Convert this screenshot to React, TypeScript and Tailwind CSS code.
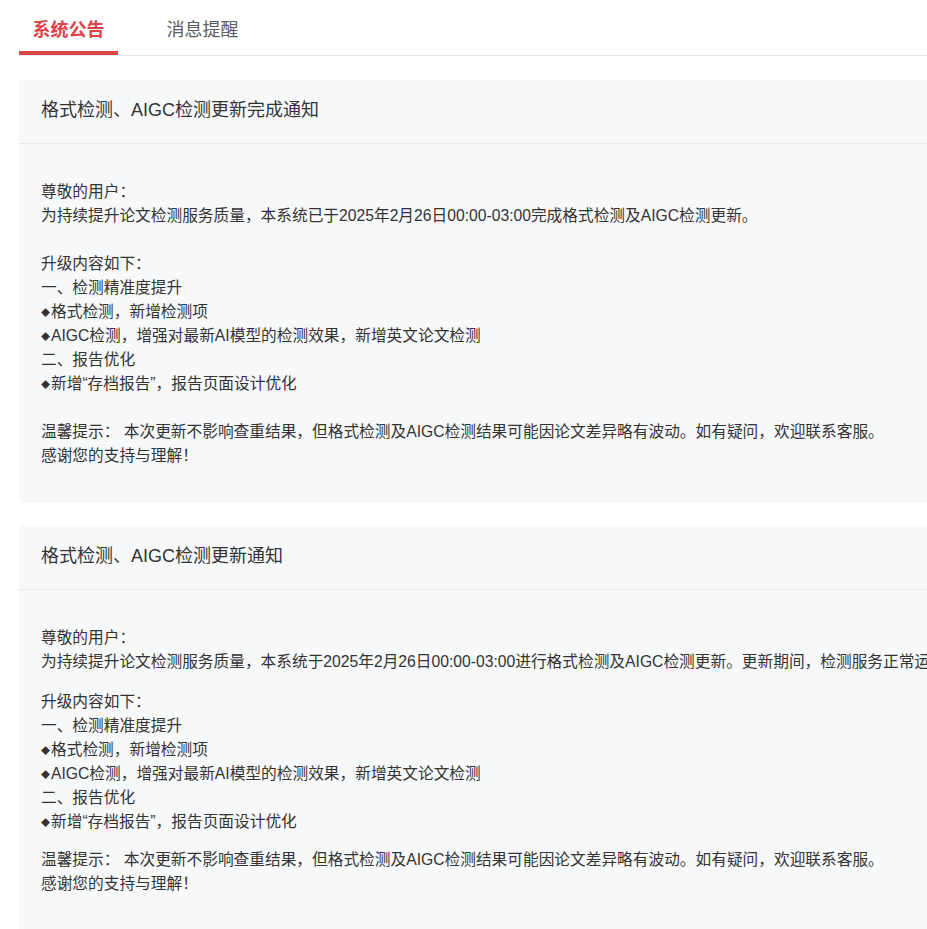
import { useState } from 'react'

// ============================================
// DATA
// ============================================

type Notice = {
  title: string
  greeting: string
  intro: string
  items: string[]
  tip: string
  thanks: string
  spacing: 'blank' | 'margin'
}

const upgradeItems = [
  '升级内容如下：',
  '一、检测精准度提升',
  '◆格式检测，新增检测项',
  '◆AIGC检测，增强对最新AI模型的检测效果，新增英文论文检测',
  '二、报告优化',
  '◆新增“存档报告”，报告页面设计优化',
]

const tipText = '温馨提示： 本次更新不影响查重结果，但格式检测及AIGC检测结果可能因论文差异略有波动。如有疑问，欢迎联系客服。'

const notices: Notice[] = [
  {
    title: '格式检测、AIGC检测更新完成通知',
    greeting: '尊敬的用户：',
    intro: '为持续提升论文检测服务质量，本系统已于2025年2月26日00:00-03:00完成格式检测及AIGC检测更新。',
    items: upgradeItems,
    tip: tipText,
    thanks: '感谢您的支持与理解！',
    spacing: 'blank',
  },
  {
    title: '格式检测、AIGC检测更新通知',
    greeting: '尊敬的用户：',
    intro: '为持续提升论文检测服务质量，本系统于2025年2月26日00:00-03:00进行格式检测及AIGC检测更新。更新期间，检测服务正常运行，不影响您的使用。',
    items: upgradeItems,
    tip: tipText,
    thanks: '感谢您的支持与理解！',
    spacing: 'margin',
  },
]

const tabs = ['系统公告', '消息提醒']

// ============================================
// COMPONENTS
// ============================================

function Line({ text }: { text: string }) {
  // small diamond bullet, like the original page renders it
  if (text.startsWith('◆')) {
    return (
      <p className="h-6">
        <span className="mr-[1px] align-[1px] text-[9px] leading-[0]">◆</span>
        {text.slice(1)}
      </p>
    )
  }
  return <p>{text}</p>
}

function NoticeCard({ notice }: { notice: Notice }) {
  const blank = notice.spacing === 'blank'
  return (
    <div className="rounded bg-[#f7f8fa]">
      <div className="h-[64px] border-b border-[#e6e8eb] px-[22px] pt-[18px]">
        <h3 className="text-[18px] leading-6 text-[#333333]">{notice.title}</h3>
      </div>
      <div className="px-[22px] pt-[36px] pb-[35px] text-[15.7px] leading-6 text-[#333333] whitespace-nowrap">
        <p>{notice.greeting}</p>
        <p>{notice.intro}</p>
        {blank ? <p>&nbsp;</p> : null}
        <div className={blank ? '' : 'mt-4'}>
          {notice.items.map((line) => (
            <Line key={line} text={line} />
          ))}
        </div>
        {blank ? <p>&nbsp;</p> : null}
        <div className={blank ? '' : 'mt-[14px]'}>
          <p>{notice.tip}</p>
          <p>{notice.thanks}</p>
        </div>
      </div>
    </div>
  )
}

export default function App() {
  const [active, setActive] = useState(0)

  return (
    <div
      className="min-h-screen w-full overflow-hidden bg-white"
      style={{ fontFamily: '"Liberation Sans", "Noto Sans CJK SC", sans-serif' }}
    >
      <div className="ml-[19px] w-[1200px]">
        {/* Tabs */}
        <div className="flex gap-[35px] border-b border-[#e4e7ed]">
          {tabs.map((tab, i) => (
            <button
              key={tab}
              onClick={() => setActive(i)}
              className={`relative h-[55px] w-[99px] pt-[5px] text-center text-[18px] leading-6 ${
                active === i ? 'font-bold text-[#dc4347]' : 'text-[#585e69]'
              }`}
            >
              {tab}
              {active === i && <span className="absolute bottom-0 left-0 h-[4px] w-full bg-[#dc4347]" />}
            </button>
          ))}
        </div>

        {/* Notices */}
        <div className="mt-[24px] flex flex-col gap-[23px]">
          {notices.map((n) => (
            <NoticeCard key={n.title} notice={n} />
          ))}
        </div>
      </div>
    </div>
  )
}
